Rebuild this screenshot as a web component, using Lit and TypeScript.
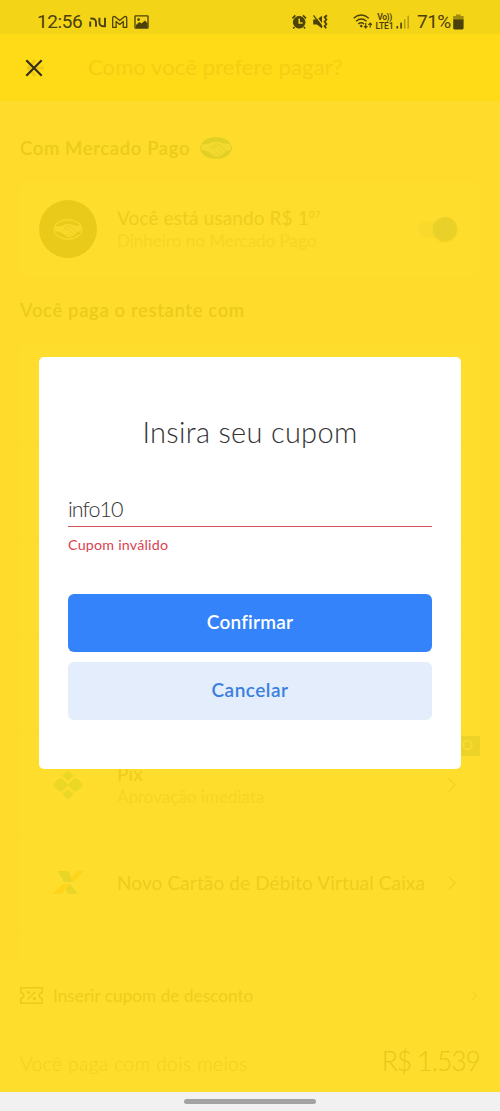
import { LitElement, html, css, svg } from "lit";
import { customElement } from "lit/decorators.js";

const hands = svg`
  <path d="M1.500 7 Q8 8 13 5 L17 4.500 Q23 7 30.500 7 L31 12.500 L26 14 Q23 18 19 19.500 L15 19.500 L8 14.500 L1 12.500 Z" fill="var(--hand)"/>
  <path d="M11.500 10 L16 6.500 L19 8 L26 13.500 M22.500 16.500 L18 12 M20 18.500 L16 14.500 M16.500 19 L14 16.500 M11.500 10 Q14 12 17 9.500" fill="none" stroke="var(--logo)" stroke-width=".9"/>`;

const chevron = (w: number, h: number) => html`
  <svg width=${w} height=${h} viewBox="0 0 8 14" fill="none" stroke="#e9ca1d" stroke-width="1">
    <path d="M.7.7 7.2 7 .7 13.3" />
  </svg>`;

@customElement("status-bar")
export class StatusBar extends LitElement {
  static styles = css`
    :host { display: flex; height: 34px; box-sizing: border-box; padding: 9px 36px 0 37px; background: #f4d416;
      color: #4b410b; font-family: Roboto, sans-serif; align-items: center; justify-content: space-between; }
    .side { display: flex; align-items: center; height: 24px; }
    .clock { font-size: 19px; width: 51px; letter-spacing: -.4px; }
    .pct { font-size: 19px; letter-spacing: -.5px; width: 36px; margin-left: 6px; }
    svg { display: block; }
    .wifi { margin-left: 25px; }
    .signal { margin-left: 2px; }
    .lte { font-weight: 600; font-size: 8.500px; line-height: 8.500px; width: 19px; text-align: center; white-space: nowrap; letter-spacing: -.1px; }
    .vo { letter-spacing: -.4px; }
  `;
  render() {
    return html`
      <div class="side">
        <span class="clock">12:56</span>
        <svg width="62" height="24" viewBox="88 9 62 24" fill="none" stroke="#4b410b">
          <path d="M90.200 25.700v-5.200M90.300 17.600q5.700-.8 5.700 4v4.100M99.400 16.800v4.700q0 4.200 5.600 3.700V16.800" stroke-width="1.900" />
          <path d="M112.700 26.400v-9.300q0-2 2-1.500l5 4 5-4q2-.5 2 1.500v9.300h-3.400v-6l-3.600 3-3.600-3v6z" stroke-width="1.300" stroke-linejoin="round" />
          <rect x="135" y="14.800" width="13" height="12.400" rx=".6" stroke-width="1.300" />
          <path d="M136 27v-3l3.400-3 2 1.600 3.600-3.200 2.600 3V27z" fill="#4b410b" stroke="none" />
          <circle cx="138.600" cy="18.600" r="1.300" fill="#4b410b" stroke="none" />
        </svg>
      </div>
      <div class="side">
        <svg width="37" height="24" viewBox="292 9 37 24" fill="#4b410b" stroke="#4b410b">
          <circle cx="300.200" cy="21.300" r="5.800" stroke-width="1" />
          <path d="M293.400 17.400l3-3M307 17.400l-3-3M295.600 26l-1.400 1.300M304.800 26l1.400 1.300" stroke-width="1.600" />
          <path d="M300.200 17.500v4.600h3.400" stroke="#f4d416" stroke-width="1.500" fill="none" />
          <path d="M314.200 18.600h3.800l5-3.800v12.800l-5-4h-3.800z" stroke="none" />
          <path d="M315.600 13.400l9 12" stroke="#f4d416" stroke-width="1.300" />
          <path d="M314.500 14.300l8.600 11.500" stroke-width="1.300" />
          <path d="M328 14.200l-2.400 2 1.800 2.300-1.800 2.300 1.800 2.200-1.800 2.200 1.600 2" stroke-width="1.800" fill="none" />
        </svg>
        <svg class="wifi" width="22" height="24" viewBox="354 9 22 24" fill="none" stroke="#4b410b" stroke-width="1.400">
          <path d="M354.600 17.200q7.600-6.400 15.200 0M357 20.200q5.300-4.400 10.600 0M359.300 23q2.900-2.400 5.800 0" />
          <path d="M362.200 23.500l1.600 1.600-1.600 1.600-1.600-1.600z" fill="#4b410b" stroke="none" />
          <path d="M366.700 22v5M371.200 26.500v-4.500M365 25.200l1.700 1.800 1.700-1.800M369.500 23.800l1.700-1.800 1.700 1.800" stroke-width="1.200" />
        </svg>
        <span class="lte"><span class="vo">Vo))</span><br />LTE1</span>
        <svg class="signal" width="15" height="24" viewBox="397 9 15 24" fill="#4b410b">
          <rect x="397.500" y="25" width="1.600" height="2.600" /><rect x="401.300" y="21.600" width="1.600" height="6" />
          <rect x="405" y="18.200" width="1.400" height="9.400" opacity=".4" /><rect x="408.500" y="14.600" width="1.400" height="13" opacity=".4" />
        </svg>
        <span class="pct">71%</span>
        <svg width="11" height="24" viewBox="453 9 11 24" fill="#4b410b">
          <path d="M456 13.400h4.600v1.600h3V19h-10.400v-4h2.800z" opacity=".5" />
          <path d="M453.200 18.600h10.400v8.500q0 1.300-1.300 1.300h-7.800q-1.300 0-1.300-1.300z" />
        </svg>
      </div>`;
  }
}

@customElement("payment-page")
export class PaymentPage extends LitElement {
  static styles = css`
    :host { display: flex; flex-direction: column; height: 1058px; background: #ffdc2b;
      font-family: Lato, sans-serif; color: #edcd1d; white-space: nowrap; }
    svg { display: block; flex: none; }
    header { height: 67px; flex: none; background: #ffda17; display: flex; align-items: center; padding-left: 26px; }
    .heading { margin: -2px 0 0 44px; font-size: 22px; color: #f3cf14; letter-spacing: .1px; }
    main { flex: 1; min-height: 0; overflow: hidden; padding: 0 20px; }
    .section { display: flex; align-items: center; gap: 10px; font-size: 18.500px; font-weight: 600; height: 28px; letter-spacing: .62px; color: #ebcb1c; }
    .first { margin-top: 33px; }
    .wallet { margin-top: 19px; height: 96px; background: #ffdd2d; border-radius: 6px; display: flex; align-items: center; padding: 0 23px 0 19px; box-shadow: 0 0 1px #fdda2a; }
    .disc { width: 58px; height: 58px; border-radius: 50%; flex: none; display: grid; place-items: center; margin-right: 20px; }
    .dark { background: #e9ca1b; }
    .copy { flex: 1; line-height: 23px; }
    .name { font-size: 19px; letter-spacing: .12px; }
    .sub { font-size: 17px; color: #f6d525; }
    sup { font-size: 10px; line-height: 0; vertical-align: 7px; }
    .toggle { width: 39px; height: 17px; border-radius: 9px; background: #f9d92b; display: flex; align-items: center; justify-content: flex-end; }
    .knob { width: 24px; height: 24px; border-radius: 50%; background: #ead129; box-shadow: 0 1px 2px #f3d225; flex: none; }
    .rest { margin-top: 19px; }
    .list { margin-top: 20px; background: #ffdd2d; box-shadow: 0 0 1px #fdda2a; border-radius: 6px; }
    .row { height: 98px; box-sizing: border-box; border-bottom: 1px solid #fedb2a; display: flex; align-items: center; padding: 0 24px 0 19px; position: relative; }
    .tag { position: absolute; top: 0; right: 0; height: 20px; line-height: 18px; padding: 0 7px; font-size: 14px; background: #edd329; color: #ffdd2d; }
    footer { flex: none; height: 132px; background: #ffdd2d; padding: 0 20px; box-sizing: border-box; }
    .coupon { display: flex; align-items: center; height: 70px; padding-right: 3px; font-size: 17px; gap: 10px; }
    .coupon .copy { letter-spacing: .12px; }
    .total { display: flex; align-items: baseline; justify-content: space-between; line-height: 50px; margin-top: 6px; }
    .means { font-size: 19px; color: #f2d020; font-weight: 300; letter-spacing: .5px; }
    .sum { font-size: 26.500px; font-weight: 300; letter-spacing: -1px; color: #e6c71b; }
  `;
  render() {
    return html`
      <header>
        <svg width="18" height="18" viewBox="0 0 18 18" fill="none" stroke="#edc914" stroke-width="2.600"><path d="M9 1 2 9l7 8M2 9h16" /></svg>
        <span class="heading">Como você prefere pagar?</span>
      </header>
      <main>
        <div class="section first">Com Mercado Pago
          <svg width="32" height="22" viewBox="0 0 32 22" style="--hand:#f4da2f;--logo:#e0cf25">
            <ellipse cx="16" cy="11" rx="16" ry="11" fill="#e3d026" />${hands}
          </svg>
        </div>
        <div class="wallet">
          <div class="disc dark">
            <svg width="30" height="21" viewBox="-1 -1 34 24" style="--hand:#f8d92b;--logo:#e9ca1b">
              <ellipse cx="16" cy="11" rx="16" ry="11" fill="#e9ca1b" stroke="#f8d92b" stroke-width="1.200" />${hands}
            </svg>
          </div>
          <div class="copy"><div class="name">Você está usando R$ 1<sup>07</sup></div><div class="sub">Dinheiro no Mercado Pago</div></div>
          <div class="toggle"><div class="knob"></div></div>
        </div>
        <div class="section rest">Você paga o restante com</div>
        <div class="list">
          <div class="row"></div><div class="row"></div><div class="row"></div><div class="row"></div>
          <div class="row">
            <div class="disc">
              <svg width="30" height="30" viewBox="0 0 30 30" fill="#ebd725">
                <path d="M9 6.500 13 2q2-2 4 0l4 4.500q-2 .3-3 1.500l-3 3-3-3q-1-1.200-3-1.500zM9 23.500 13 28q2 2 4 0l4-4.500q-2-.3-3-1.500l-3-3-3 3q-1 1.200-3 1.500zM6.300 8.400H9l5 5q1.600 1.600 0 3.200l-5 5H6.300L1.500 17q-2-2 0-4zM23.700 8.400H21l-5 5q-1.600 1.600 0 3.200l5 5h2.700L28.500 17q2-2 0-4z" />
              </svg>
            </div>
            <div class="copy"><div class="name">Pix</div><div class="sub">Aprovação imediata</div></div>
            ${chevron(8, 14)}<span class="tag">NOVO</span>
          </div>
          <div class="row">
            <div class="disc">
              <svg width="32" height="23" viewBox="0 0 32 23">
                <path d="M5.700 0h10.600l5 11H12zM18 13l7.700 10H16l-2.500-5z" fill="#e8d527" />
                <path d="M25 0h7L21.300 11 18.900 6.500zM0 23h9.700L18 13h-7z" fill="#ffd51c" />
              </svg>
            </div>
            <div class="copy"><div class="name">Novo Cartão de Débito Virtual Caixa</div></div>
            ${chevron(8, 14)}
          </div>
          <div class="row"></div>
        </div>
      </main>
      <footer>
        <div class="coupon">
          <svg width="23" height="17" viewBox="0 0 23 17" fill="none" stroke="#eacb1d" stroke-width="1.400">
            <path d="M.7.7h21.600v4.800q-3 0-3 3t3 3v4.800H.7v-4.800q3 0 3-3t-3-3zM7.500 12.500l8-8" />
            <circle cx="8.500" cy="5.300" r=".9" fill="#eacb1d" /><circle cx="14.600" cy="11.700" r=".9" fill="#eacb1d" />
          </svg>
          <span class="copy">Inserir cupom de desconto</span>${chevron(6, 11)}
        </div>
        <div class="total"><span class="means">Você paga com dois meios</span><span class="sum">R$ 1.539</span></div>
      </footer>`;
  }
}

@customElement("coupon-dialog")
export class CouponDialog extends LitElement {
  static styles = css`
    :host { display: block; box-sizing: border-box; width: 422px; height: 412px; background: #fff; border-radius: 5px; padding: 52px 29px 0;
      font-family: Lato, sans-serif; color: #333; }
    .title { text-align: center; font-size: 29px; font-weight: 300; line-height: 46px; letter-spacing: .3px; }
    .field { margin-top: 40px; height: 32px; box-sizing: border-box; border-bottom: 1px solid #d0555b; font-size: 21.500px; font-weight: 300; line-height: 29px; letter-spacing: -.95px; }
    .error { margin-top: 8px; height: 21px; line-height: 20px; font-size: 14.300px; color: #d9434f; letter-spacing: .2px; }
    .btn { display: block; width: 100%; height: 58px; border: 0; border-radius: 6px; padding: 0 0 4px; font: 600 19px Lato, sans-serif; }
    .ok { margin-top: 38px; background: #3483fa; color: #fff; letter-spacing: .2px; }
    .no { margin-top: 10px; background: #e3edfb; color: #3a80e0; letter-spacing: .5px; }
  `;
  render() {
    return html`
      <div class="title">Insira seu cupom</div>
      <div class="field">info10</div>
      <div class="error">Cupom inválido</div>
      <button class="btn ok">Confirmar</button>
      <button class="btn no">Cancelar</button>`;
  }
}

@customElement("app-root")
export class AppRoot extends LitElement {
  static styles = css`
    :host { display: block; position: relative; width: 500px; height: 1111px; overflow: hidden; }
    .nav { height: 19px; background: #f1f1f1; display: flex; align-items: center; justify-content: center; }
    .pill { width: 132px; height: 5px; border-radius: 3px; background: #a3a3a3; }
    .close { position: absolute; left: 25px; top: 59px; }
    .modal { position: absolute; left: 39px; top: 357px; }
  `;
  render() {
    return html`
      <status-bar></status-bar>
      <payment-page></payment-page>
      <div class="nav"><div class="pill"></div></div>
      <svg class="close" width="18" height="18" viewBox="0 0 18 18" stroke="#333019" stroke-width="2.200"><path d="M1.300 1.300l15.400 15.400M16.700 1.300 1.300 16.700" /></svg>
      <coupon-dialog class="modal"></coupon-dialog>`;
  }
}
